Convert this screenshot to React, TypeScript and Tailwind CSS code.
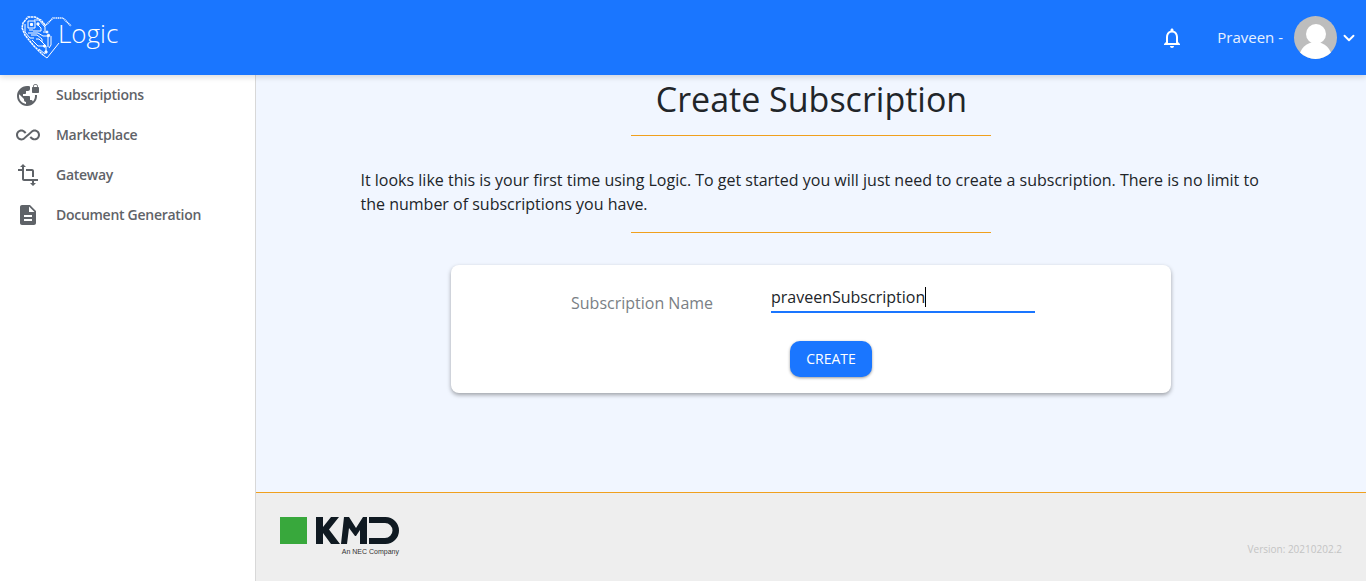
import { ChevronDown } from "lucide-react";

const font = "font-['Open_Sans','Noto_Sans',sans-serif]";

function LogoHeart() {
  return (
    <svg width="51" height="43" viewBox="0 0 51 43" fill="none" stroke="#fff" strokeWidth="1" className="shrink-0">
      {/* right lobe, dotted */}
      <path d="M24 10 L32 2 H42 L50 10" strokeDasharray="1.2 0.6" strokeWidth="1.5" />
      <path d="M38 27 L26 42 L22 39" />
      {/* left lobe */}
      <path d="M24 9 L20 4 L14 1 H7 L2 7 L1 12 L4 19 L12 29 L22 39" strokeWidth="1.5" strokeDasharray="2.500 0.5" />
      {/* circuit */}
      <path d="M7 5 H14 V12 H7 Z" />
      <path d="M9.500 7.500 H11.500 V9.500 H9.500 Z" fill="#fff" />
      <path d="M4 8 V16 L9 22 H13" />
      <path d="M13 4 H18 L24 11 V15" />
      <path d="M16 8 L20 12 V15 H12" />
      <path d="M8 14 H12 M7 17 H17 L22 20 H27" />
      <path d="M10 19 H16 L21 23 V26" />
      <path d="M11 24 L17 30 H23" />
      <path d="M15 23 H18 L25 30 V35" />
      <path d="M18 33 L24 38" />
      <path d="M27 19 V31" />
      <path d="M30 20 V29 L28 32" />
      <path d="M22 16 H26" />
      <circle cx="27.500" cy="19.500" r="1.200" fill="#fff" />
      <circle cx="23.500" cy="30" r="1.200" fill="#fff" />
      <circle cx="25" cy="36" r="1.200" fill="#fff" />
      <circle cx="17" cy="8" r="1.200" fill="#fff" />
      <circle cx="26" cy="16" r="1" fill="#fff" />
    </svg>
  );
}

function NavIcon({ d }: { d: string }) {
  return (
    <svg width="24" height="24" viewBox="0 0 24 24" fill="#5f6368">
      <path d={d} />
    </svg>
  );
}

const navItems = [
  {
    label: "Subscriptions",
    d: "M22 4v-.5C22 2.120 20.880 1 19.500 1S17 2.120 17 3.500V4c-.55 0-1 .45-1 1v4c0 .55.45 1 1 1h5c.55 0 1-.45 1-1V5c0-.55-.45-1-1-1zm-.8 0h-3.400v-.5c0-.94.76-1.700 1.700-1.700s1.700.76 1.700 1.700V4zm-2.280 8c.04.33.08.66.08 1 0 2.080-.8 3.970-2.100 5.390-.26-.81-1-1.390-1.900-1.390h-1v-3c0-.55-.45-1-1-1H7v-2h2c.55 0 1-.45 1-1V8h2c1.100 0 2-.9 2-2V3.460c-.95-.3-1.950-.46-3-.46C5.480 3 1 7.480 1 13s4.480 10 10 10 10-4.480 10-10c0-.34-.02-.67-.05-1h-2.030zM10 20.930c-3.950-.49-7-3.850-7-7.930 0-.62.08-1.210.21-1.790L8 16v1c0 1.100.9 2 2 2v1.930z",
  },
  {
    label: "Marketplace",
    d: "M18.600 6.620c-1.440 0-2.800.56-3.770 1.530L12 10.660 10.480 12h.01L7.800 14.390c-.64.64-1.490.99-2.400.99-1.870 0-3.390-1.510-3.390-3.380S3.530 8.620 5.400 8.620c.91 0 1.760.35 2.440 1.030l1.130 1 1.510-1.340L9.220 8.200C8.200 7.180 6.840 6.620 5.400 6.620 2.420 6.620 0 9.040 0 12s2.420 5.380 5.400 5.380c1.440 0 2.800-.56 3.770-1.530l2.830-2.500.01.01L13.520 12h-.01l2.690-2.390c.64-.64 1.490-.99 2.400-.99 1.870 0 3.390 1.510 3.390 3.380s-1.520 3.380-3.390 3.380c-.9 0-1.760-.35-2.440-1.030l-1.140-1.010-1.510 1.340 1.270 1.120c1.020 1.010 2.370 1.570 3.820 1.570 2.980 0 5.400-2.410 5.400-5.380s-2.420-5.370-5.400-5.370z",
  },
  {
    label: "Gateway",
    d: "M22 18v-2H8V4h2L7 1 4 4h2v2H2v2h4v8c0 1.100.9 2 2 2h8v2h-2l3 3 3-3h-2v-2h4zM10 8h6v6h2V8c0-1.100-.9-2-2-2h-6v2z",
  },
  {
    label: "Document Generation",
    d: "M14 2H6c-1.100 0-2 .9-2 2v16c0 1.100.9 2 2 2h12c1.100 0 2-.9 2-2V8l-6-6zm2 16H8v-2h8v2zm0-4H8v-2h8v2zm-3-5V3.500L18.500 9H13z",
  },
];

export default function App() {
  return (
    <div className={`${font} flex h-[581px] w-[1366px] flex-col overflow-hidden bg-white`}>
      <header className="relative z-10 flex h-[75px] shrink-0 items-center justify-between bg-[#1a76ff] pl-[21px] pr-[8px] shadow-[0_2px_6px_rgba(0,0,0,0.15)]">
        <div className="flex items-center">
          <LogoHeart />
          <span className="-ml-[14px] -mt-[10px] text-[26px] font-light leading-none text-white">Logic</span>
        </div>
        <div className="flex items-center text-white">
          <svg width="24" height="24" viewBox="0 0 24 24" fill="#fff" className="mr-[33px]">
            <path d="M12 22c1.100 0 2-.9 2-2h-4c0 1.100.9 2 2 2zm6-6v-5c0-3.070-1.630-5.640-4.500-6.320V4c0-.83-.67-1.500-1.500-1.500s-1.500.67-1.500 1.500v.68C7.640 5.360 6 7.920 6 11v5l-2 2v1h16v-1l-2-2zm-2 1H8v-6c0-2.480 1.510-4.500 4-4.500s4 2.020 4 4.500v6z" />
          </svg>
          <span className="text-[15px] text-white/90">Praveen -</span>
          <span className="relative ml-[11px] block h-[43px] w-[43px] overflow-hidden rounded-full bg-[#bdbdbd]">
            <span className="absolute left-[11.500px] top-[8px] h-[20px] w-[20px] rounded-full bg-white" />
            <span className="absolute left-[5px] top-[26px] h-[34px] w-[33px] rounded-full bg-white" />
          </span>
          <ChevronDown size={18} strokeWidth={2.5} className="ml-[3px]" />
        </div>
      </header>

      <div className="flex min-h-0 flex-1">
        <aside className="w-[256px] shrink-0 border-r border-[#d8d8d8] bg-white pl-[16px]">
          <nav className="flex flex-col">
            {navItems.map((item) => (
              <a key={item.label} className="flex h-10 items-center gap-[16px]" href="#">
                <span className="flex w-6 justify-center">
                  <NavIcon d={item.d} />
                </span>
                <span className="text-sm font-semibold tracking-[-0.28px] text-[#5f6368]">{item.label}</span>
              </a>
            ))}
          </nav>
        </aside>

        <div className="flex min-w-0 flex-1 flex-col">
          <main className="flex h-[417px] flex-col items-center bg-[#f1f6ff]">
            <h1 className="ml-[1px] mt-[3px] text-[34px] font-normal leading-[42px] text-[#212529]">Create Subscription</h1>
            <div className="mt-[15px] h-px w-[360px] bg-[#f0a01e]" />
            <p className="ml-[4px] mt-[32px] w-[905px] text-base leading-6 text-[#212529]">
              It looks like this is your first time using Logic. To get started you will just need to create a subscription. There is no limit to the number of subscriptions you have.
            </p>
            <div className="mt-[16px] h-px w-[360px] bg-[#f0a01e]" />
            <section className="mt-[32px] flex h-[128px] w-[720px] flex-col items-center rounded-lg bg-white shadow-[0_2px_4px_rgba(0,0,0,0.35)]">
              <div className="mt-[20px] flex w-full">
                <label className="ml-[120px] mt-[6px] w-[200px] text-base leading-6 text-[#7a7f85]">Subscription Name</label>
                <div className="-mt-[2px] h-[30px] w-[264px] border-b-2 border-[#1a76ff] text-base leading-6 text-[#212529]">
                  praveenSubscription<span className="inline-block h-[20px] w-px translate-y-[4px] bg-black" />
                </div>
              </div>
              <button className="ml-[40px] mt-[26px] h-9 w-[82px] rounded-[10px] bg-[#1a76ff] text-sm text-white shadow-[0_1px_3px_rgba(0,0,0,0.4)]" type="button">
                CREATE
              </button>
            </section>
          </main>

          <footer className="relative flex flex-1 border-t border-[#f0a01e] bg-[#eeeeee]">
            <div className="ml-[24px] mt-[24px] flex items-start">
              <span className="h-[27px] w-[27px] bg-[#38a83c]" />
              <div className="ml-[9px] flex flex-col items-end">
                <svg width="83" height="27" viewBox="0 0 83 27" fill="#101a22">
                  <path d="M0 0h7v10L15 0h8L13 12.500 24 27h-9L7 16v11H0Z" />
                  <path d="M25 27 28 0h5l7 11 7-11h4V27h-7V13l-4 6h-1l-6-8-2 16Z" />
                  <path d="M53 0h16.500a13.500 13.500 0 0 1 0 27H53v-6h16a7.500 7.500 0 0 0 0-15H53Z" />
                </svg>
                <span className="mt-[2px] font-['Liberation_Sans',sans-serif] text-[7px] leading-[12px] text-[#333]">An NEC Company</span>
              </div>
            </div>
            <span className="absolute bottom-[26px] right-[24px] text-[10px] leading-[12px] text-[#c4c4c4]">Version: 20210202.2</span>
          </footer>
        </div>
      </div>
    </div>
  );
}
